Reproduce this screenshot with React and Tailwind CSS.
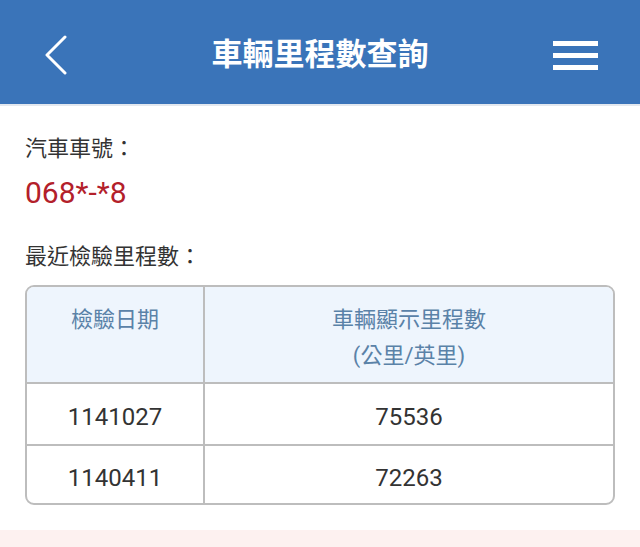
import React from "react";

const font = { fontFamily: "Roboto, 'Noto Sans CJK TC', 'Noto Sans', sans-serif" };

export default function App() {
  return (
    <div className="w-[640px] h-[547px] bg-white overflow-hidden flex flex-col" style={font}>
      <header className="h-[106px] shrink-0 bg-[#3a74b9] grid grid-cols-[1fr_auto_1fr] items-center pt-[6px] border-b-2 border-[#e3e8ef]">
        <div className="flex items-center pl-[44px]">
          <svg width="24" height="40" viewBox="0 0 24 40" fill="none">
            <polyline points="21,2 3,20 21,38" stroke="white" strokeWidth="3" strokeLinecap="round" strokeLinejoin="round" />
          </svg>
        </div>
        <h1 className="text-white text-[31px] font-bold leading-[40px]">車輛里程數查詢</h1>
        <div className="flex items-center justify-end pr-[42px]">
          <svg width="45" height="29" viewBox="0 0 45 29">
            <rect x="0" y="0" width="45" height="5" fill="white" />
            <rect x="0" y="12" width="45" height="5" fill="white" />
            <rect x="0" y="24" width="45" height="5" fill="white" />
          </svg>
        </div>
      </header>

      <main className="flex-1 px-[25px] flex flex-col">
        <div className="mt-[28px] text-[22px] leading-[30px] text-[#333333]">汽車車號：</div>
        <div className="mt-[11px] text-[30px] leading-[36px] text-[#b3202a]">068*-*8</div>
        <div className="mt-[31px] text-[22px] leading-[30px] text-[#333333]">最近檢驗里程數：</div>

        <div className="mt-[13px] w-[590px] border-2 border-[#bdbdbd] rounded-[9px] overflow-hidden text-[#333333]">
          <div className="grid grid-cols-[176px_2px_1fr] h-[95px] bg-[#eef5fd] text-[#5a82a8] text-[22px] leading-[36px]">
            <div className="pt-[15px] text-center">檢驗日期</div>
            <div className="bg-[#bdbdbd]" />
            <div className="pt-[15px] text-center">
              <div>車輛顯示里程數</div>
              <div>(公里/英里)</div>
            </div>
          </div>
          <div className="h-[2px] bg-[#bdbdbd]" />
          <div className="grid grid-cols-[176px_2px_1fr] h-[60px] text-[24px]">
            <div className="flex items-center justify-center pt-[6px]">1141027</div>
            <div className="bg-[#bdbdbd]" />
            <div className="flex items-center justify-center pt-[6px]">75536</div>
          </div>
          <div className="h-[2px] bg-[#bdbdbd]" />
          <div className="grid grid-cols-[176px_2px_1fr] h-[57px] text-[24px]">
            <div className="flex items-center justify-center pt-[6px]">1140411</div>
            <div className="bg-[#bdbdbd]" />
            <div className="flex items-center justify-center pt-[6px]">72263</div>
          </div>
        </div>
      </main>

      <div className="h-[17px] shrink-0 bg-[#fdf1f0]" />
    </div>
  );
}
